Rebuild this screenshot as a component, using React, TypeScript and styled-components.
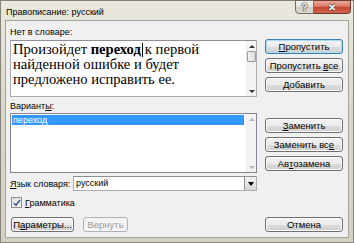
import styled, { createGlobalStyle, css } from "styled-components";

const GlobalStyle = createGlobalStyle`
  html, body {
    margin: 0;
    padding: 0;
  }
  body {
    width: 354px;
    height: 243px;
    overflow: hidden;
    background: #d6d3c4;
    font-family: "Liberation Sans", Arial, sans-serif;
  }
  * {
    box-sizing: border-box;
  }
`;

const Window = styled.div`
  display: flex;
  flex-direction: column;
  width: 354px;
  height: 243px;
  border: 1px solid #85847c;
  background: linear-gradient(180deg, #ebe9df 0%, #dcd9cb 40%, #d4d1c1 100%);
`;

const TitleBar = styled.div`
  display: flex;
  align-items: flex-start;
  height: 19px;
  padding-left: 5px;
`;

const Title = styled.div`
  align-self: center;
  flex: 1;
  font-size: 9px;
  color: #000;
  padding-top: 2px;
`;

const Captions = styled.div`
  display: flex;
  margin-top: -1px;
  margin-right: 2px;
`;

const CaptionButton = styled.div<{ $close?: boolean }>`
  display: flex;
  align-items: center;
  justify-content: center;
  height: 14px;
  font-weight: bold;
  color: #fff;
  font-size: 10px;
  text-shadow: 0 0 1px #333, 0 0 1px #333, 0 0 2px #555;
  ${(p) =>
    p.$close
      ? css`
          width: 37px;
          border: 1px solid #6a3a30;
          border-left: none;
          border-radius: 0 0 4px 0;
          background: linear-gradient(180deg, #eaa999 0%, #d97a66 45%, #c7452f 52%, #d2644b 100%);
        `
      : css`
          width: 19px;
          border: 1px solid #6f6e69;
          border-radius: 0 0 0 4px;
          background: linear-gradient(180deg, #f4f3ef 0%, #e2e1dc 50%, #cfcec8 52%, #d9d8d2 100%);
        `}
`;

const Client = styled.div`
  flex: 1;
  margin: 0 4px 4px 4px;
  border: 1px solid #a5a49c;
  background: #f0f0f0;
  display: grid;
  grid-template-columns: 247px 78px;
  column-gap: 8px;
  padding: 0 5px 5px 4px;
  font-size: 9px;
  color: #000;
`;

const LeftCol = styled.div`
  display: flex;
  flex-direction: column;
`;

const RightCol = styled.div`
  display: flex;
  flex-direction: column;
  gap: 4px;
  padding-top: 18px;
`;

const Label = styled.div<{ $top: number }>`
  margin-top: ${(p) => p.$top}px;
  height: 12px;
  line-height: 12px;
  white-space: nowrap;
`;

const Key = styled.span`
  text-decoration: underline;
  text-underline-offset: 1px;
`;

const EditBox = styled.div`
  display: flex;
  margin-top: 2px;
  height: 57px;
  border: 1px solid #abadb3;
  border-top-color: #8e9096;
  background: #fff;
`;

const Sentence = styled.div`
  flex: 1;
  padding: 1px 0 0 2px;
  font-family: "Liberation Serif", "Times New Roman", serif;
  font-size: 14.6px;
  line-height: 15px;
  color: #000;
`;

const Caret = styled.span`
  display: inline-block;
  width: 0;
  height: 14px;
  margin: 0 2px 0 1px;
  border-left: 1px solid #000;
  vertical-align: -3px;
`;

const ScrollBar = styled.div`
  display: flex;
  flex-direction: column;
  width: 10px;
  background: #f3f3f3;
  border-left: 1px solid #ececec;
`;

const ScrollArrow = styled.div<{ $down?: boolean; $off?: boolean }>`
  display: flex;
  align-items: center;
  justify-content: center;
  height: 10px;
  &::after {
    content: "";
    border-left: 3px solid transparent;
    border-right: 3px solid transparent;
    ${(p) =>
      p.$down
        ? css`border-top: 3px solid ${p.$off ? "#b4b4b4" : "#333"};`
        : css`border-bottom: 3px solid ${p.$off ? "#b4b4b4" : "#333"};`}
  }
`;

const Thumb = styled.div`
  height: 11px;
  border: 1px solid #9a9a9a;
  border-radius: 1px;
  background: linear-gradient(90deg, #f4f4f4, #dadada);
`;

const Track = styled.div`
  flex: 1;
`;

const ListBox = styled.div`
  display: flex;
  margin-top: 1px;
  height: 60px;
  border: 1px solid #828790;
  background: #fff;
`;

const ListItems = styled.div`
  flex: 1;
  padding: 1px 2px 0 1px;
`;

const ListItem = styled.div<{ $selected?: boolean }>`
  height: 10px;
  line-height: 10px;
  padding-left: 1px;
  background: ${(p) => (p.$selected ? "#3399ff" : "transparent")};
  color: ${(p) => (p.$selected ? "#fff" : "#000")};
`;

const LangRow = styled.div`
  display: flex;
  align-items: center;
  margin-top: 3px;
  height: 15px;
`;

const LangLabel = styled.div`
  width: 63px;
`;

const Select = styled.div`
  flex: 1;
  display: flex;
  height: 15px;
  border: 1px solid #abadb3;
  border-top-color: #8e9096;
  background: #fff;
`;

const SelectValue = styled.div`
  flex: 1;
  line-height: 13px;
  padding-left: 2px;
`;

const DropButton = styled.div`
  display: flex;
  align-items: center;
  justify-content: center;
  width: 12px;
  border-left: 1px solid #8e8f8f;
  background: linear-gradient(180deg, #f2f2f2 0%, #e6e6e6 50%, #d6d6d6 100%);
  &::after {
    content: "";
    border-left: 3px solid transparent;
    border-right: 3px solid transparent;
    border-top: 4px solid #000;
  }
`;

const CheckRow = styled.div`
  display: flex;
  align-items: center;
  gap: 3px;
  margin-top: 6px;
  height: 11px;
  padding-left: 1px;
`;

const CheckBox = styled.div`
  display: flex;
  align-items: center;
  justify-content: center;
  width: 11px;
  height: 11px;
  border: 1px solid #8e8f8f;
  background: linear-gradient(135deg, #dcdcdc, #fbfbfb);
`;

const Footer = styled.div`
  display: flex;
  gap: 9px;
  margin-top: auto;
  padding-left: 1px;
`;

const Button = styled.div<{ $w?: number; $default?: boolean; $disabled?: boolean }>`
  display: block;
  width: ${(p) => (p.$w ? `${p.$w}px` : "100%")};
  height: 15px;
  line-height: 13px;
  text-align: center;
  border: 1px solid #707070;
  border-radius: 3px;
  background: linear-gradient(180deg, #f2f2f2 0%, #ebebeb 50%, #dddddd 51%, #cfcfcf 100%);
  box-shadow: inset 0 0 0 1px #fbfbfb;
  font-size: 9.5px;
  white-space: nowrap;
  color: #000;
  ${(p) =>
    p.$default &&
    css`
      border-color: #3c7fb1;
      box-shadow: inset 0 0 0 1px #a8dcf6;
    `}
  ${(p) =>
    p.$disabled &&
    css`
      border-color: #adb2b5;
      background: #f4f4f4;
      box-shadow: none;
      color: #9a9a9a;
    `}
`;

const CancelButton = styled(Button)`
  margin-top: auto;
`;

const GroupGap = styled.div`
  height: 18px;
`;

export default function App() {
  return (
    <>
      <GlobalStyle />
      <Window>
        <TitleBar>
          <Title>Правописание: русский</Title>
          <Captions>
            <CaptionButton>?</CaptionButton>
            <CaptionButton $close>✕</CaptionButton>
          </Captions>
        </TitleBar>

        <Client>
          <LeftCol>
            <Label $top={5}>Нет в словаре:</Label>
            <EditBox>
              <Sentence>
                Произойдет <b>переход</b>
                <Caret />к первой найденной ошибке и будет предложено исправить ее.
              </Sentence>
              <ScrollBar>
                <ScrollArrow />
                <Thumb />
                <Track />
                <ScrollArrow $down />
              </ScrollBar>
            </EditBox>

            <Label $top={3}>
              Вариант<Key>ы</Key>:
            </Label>
            <ListBox>
              <ListItems>
                <ListItem $selected>переход</ListItem>
              </ListItems>
              <ScrollBar>
                <ScrollArrow $off />
                <Track />
                <ScrollArrow $down $off />
              </ScrollBar>
            </ListBox>

            <LangRow>
              <LangLabel>
                <Key>Я</Key>зык словаря:
              </LangLabel>
              <Select>
                <SelectValue>русский</SelectValue>
                <DropButton />
              </Select>
            </LangRow>

            <CheckRow>
              <CheckBox>
                <svg width="8" height="8" viewBox="0 0 8 8">
                  <path d="M1 4.2 L3 6.3 L7 1" fill="none" stroke="#3d5a8a" strokeWidth="1.6" />
                </svg>
              </CheckBox>
              <span>
                <Key>Г</Key>рамматика
              </span>
            </CheckRow>

            <Footer>
              <Button $w={63}>
                П<Key>а</Key>раметры...
              </Button>
              <Button $w={45} $disabled>
                Вернуть
              </Button>
            </Footer>
          </LeftCol>

          <RightCol>
            <Button $default>
              <Key>П</Key>ропустить
            </Button>
            <Button>
              Пропустить <Key>в</Key>се
            </Button>
            <Button>
              <Key>Д</Key>обавить
            </Button>
            <GroupGap />
            <Button>
              <Key>З</Key>аменить
            </Button>
            <Button>
              Заменить вс<Key>е</Key>
            </Button>
            <Button>
              Ав<Key>т</Key>озамена
            </Button>
            <CancelButton>Отмена</CancelButton>
          </RightCol>
        </Client>
      </Window>
    </>
  );
}
